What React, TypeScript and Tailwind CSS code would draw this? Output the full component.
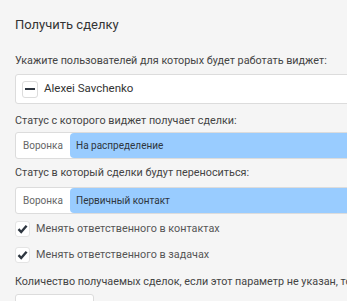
import React from 'react';

// Чекбокс с галочкой
const Check: React.FC<{ label: string }> = ({ label }) => (
  <div className="flex items-center h-[16px]">
    <div className="w-[15px] h-[16px] bg-white border border-[#e4e4e4] rounded-[3px] flex items-center justify-center">
      <svg width="11" height="10" viewBox="0 0 11 10">
        <path d="M1.5 5.2 L4.2 8 L9.6 1.8" fill="none" stroke="#2e3640" strokeWidth="2.4" />
      </svg>
    </div>
    <span className="ml-[6px] text-[10.8px] text-[#555]">{label}</span>
  </div>
);

// Поле выбора воронки и статуса
const Pipeline: React.FC<{ status: string }> = ({ status }) => (
  <div className="flex h-[27px] w-[500px] bg-white border border-[#dcdcdc] rounded-[3px]">
    <span className="w-[54px] pl-[7px] flex items-center text-[10px] text-[#666]">Воронка</span>
    <span className="flex-1 flex items-center pl-[6px] bg-[#99ccff] rounded-l-[4px] text-[10px] text-[#2e3640]">{status}</span>
  </div>
);

export default function App() {
  return (
    <div
      className="w-[347px] h-[301px] overflow-hidden bg-[#f5f5f5] text-[#444]"
      style={{ fontFamily: 'Roboto, "Liberation Sans", sans-serif' }}
    >
      <div className="pl-[15px] pt-[15px] flex flex-col w-[520px]">
        <div className="h-[20px] leading-[20px] text-[13px] text-[#333]">Получить сделку</div>

        <div className="mt-[17px] h-[18px] leading-[18px] text-[10.8px]">
          Укажите пользователей для которых будет работать виджет:
        </div>
        <div className="mt-[4px] h-[30px] w-[500px] bg-white border border-[#dcdcdc] rounded-[3px] flex items-center pl-[6px]">
          <div className="w-[16px] h-[17px] border border-[#dcdcdc] rounded-[3px] flex items-center justify-center">
            <div className="w-[10px] h-[2px] bg-[#2e3640]" />
          </div>
          <span className="ml-[6px] text-[11.5px] text-[#333]">Alexei Savchenko</span>
        </div>

        <div className="mt-[8px] h-[18px] leading-[18px] text-[10.8px]">Статус с которого виджет получает сделки:</div>
        <div className="mt-[2px]">
          <Pipeline status="На распределение" />
        </div>

        <div className="mt-[5px] h-[18px] leading-[18px] text-[10.8px]">Статус в который сделки будут переноситься:</div>
        <div className="mt-[5px]">
          <Pipeline status="Первичный контакт" />
        </div>

        <div className="mt-[7px] flex flex-col gap-[10px]">
          <Check label="Менять ответственного в контактах" />
          <Check label="Менять ответственного в задачах" />
        </div>

        <div className="mt-[10px] h-[18px] leading-[18px] text-[10.8px] whitespace-nowrap">
          Количество получаемых сделок, если этот параметр не указан, то виджет получит все сделки
        </div>
        <div className="mt-[3px] w-[79px] h-[26px] bg-white border border-[#dcdcdc] rounded-[3px]" />
      </div>
    </div>
  );
}
